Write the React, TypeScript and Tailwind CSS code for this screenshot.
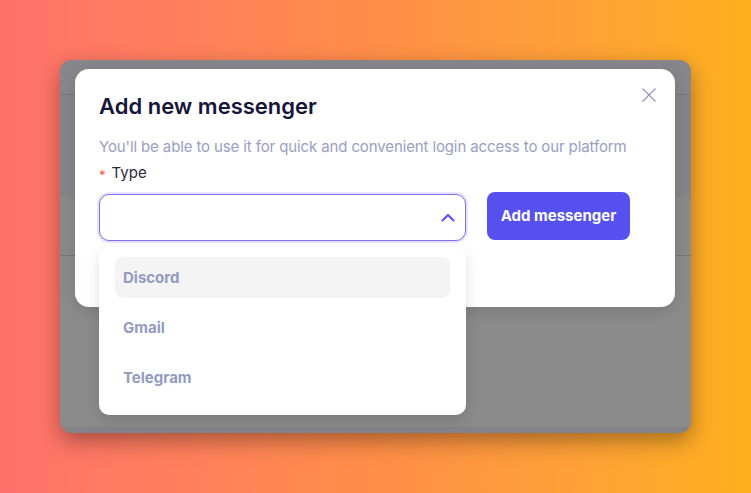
import React from "react";

export default function App() {
  const font = { fontFamily: "Inter, 'Noto Sans', sans-serif" };
  return (
    <div
      className="relative h-[493px] w-[751px] overflow-hidden bg-gradient-to-r from-[#ff716b] via-[#ff8e47] to-[#fdb01c] px-[60px] pt-[60px]"
      style={font}
    >
      {/* dimmed page window */}
      <div className="flex h-[373px] w-[631px] flex-col overflow-hidden rounded-[12px] bg-[#8a8a8a] shadow-[0_8px_22px_rgba(0,0,0,0.35)]">
        <div className="h-[35px] border-b border-[#78787d] bg-[#87878b]" />
        <div className="h-[102px] bg-[#858589]" />
        <div className="h-[59px] border-b border-[#77777b] bg-[#8a8a8a]" />
        <div className="flex-1 bg-[#8b8b8b]" />
        <div className="h-[6px] bg-[#838388]" />
      </div>

      {/* modal */}
      <div className="absolute left-[75px] top-[69px] h-[238px] w-[600px] rounded-[14px] bg-white px-[24px] pt-[22px] shadow-[0_4px_16px_rgba(0,0,0,0.12)]">
        <button className="absolute right-[19px] top-[19px] flex h-[14px] w-[14px] items-center justify-center text-[#8c91b5]">
          <svg width="16" height="16" viewBox="0 0 16 16" fill="none" stroke="currentColor" strokeWidth="1.6" strokeLinecap="round">
            <path d="M1 1L15 15M15 1L1 15" />
          </svg>
        </button>
        <h2 className="text-[22px] font-semibold leading-[30px] text-[#16163a]">Add new messenger</h2>
        <p className="mt-[15px] text-[15px] leading-[22px] tracking-[-0.12px] text-[#9a9ec4]">
          You'll be able to use it for quick and convenient login access to our platform
        </p>
        <div className="mt-[2px] flex items-center text-[15px] leading-[22px] text-[#2b2b3a]">
          <span className="mr-[6px] mt-[4px] text-[13px] text-[#ff4d4f]">*</span>
          <span>Type</span>
        </div>
        <div className="mt-[6px] flex items-start gap-[21px]">
          <div className="mt-[2px] flex h-[47px] w-[367px] items-center justify-end rounded-[10px] border-[1.5px] border-[#7c70f6] bg-white pr-[10px] shadow-[0_0_0_2px_rgba(124,112,246,0.18)]">
            <svg width="14" height="9" viewBox="0 0 14 9" fill="none" stroke="#5a4ff0" strokeWidth="2" strokeLinecap="round" strokeLinejoin="round">
              <path d="M1.5 7.5L7 2L12.5 7.5" />
            </svg>
          </div>
          <button className="h-[48px] w-[143px] rounded-[8px] bg-[#5650f0] text-[15px] font-bold text-white">
            Add messenger
          </button>
        </div>
      </div>

      {/* dropdown */}
      <div className="absolute left-[99px] top-[247px] flex w-[367px] flex-col gap-[9px] rounded-[10px] bg-white px-[16px] pb-[17px] pt-[10px] shadow-[0_6px_16px_rgba(0,0,0,0.12)]">
        {["Discord", "Gmail", "Telegram"].map((t, i) => (
          <div
            key={t}
            className={`flex h-[41px] items-center rounded-[8px] px-[8px] pt-[2px] text-[15px] font-bold text-[#949ac2] ${i === 0 ? "bg-[#f4f4f4]" : ""}`}
          >
            {t}
          </div>
        ))}
      </div>
    </div>
  );
}
